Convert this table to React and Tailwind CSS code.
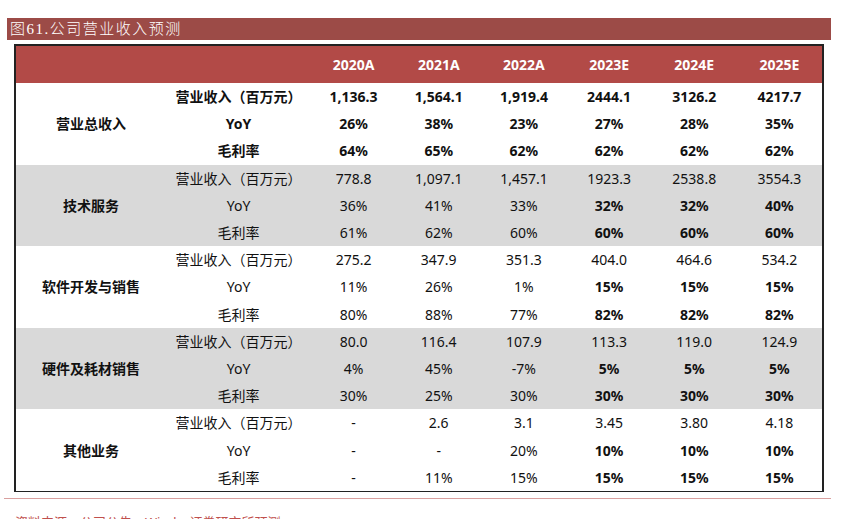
import React from 'react';

const years = ['2020A', '2021A', '2022A', '2023E', '2024E', '2025E'];

// estBold: bold only on the forecast columns (2023E onwards)
const sections = [
  {
    name: '营业总收入',
    shade: false,
    allBold: true,
    rows: [
      ['营业收入（百万元）', ['1,136.3', '1,564.1', '1,919.4', '2444.1', '3126.2', '4217.7']],
      ['YoY', ['26%', '38%', '23%', '27%', '28%', '35%']],
      ['毛利率', ['64%', '65%', '62%', '62%', '62%', '62%']],
    ],
  },
  {
    name: '技术服务',
    shade: true,
    rows: [
      ['营业收入（百万元）', ['778.8', '1,097.1', '1,457.1', '1923.3', '2538.8', '3554.3']],
      ['YoY', ['36%', '41%', '33%', '32%', '32%', '40%'], true],
      ['毛利率', ['61%', '62%', '60%', '60%', '60%', '60%'], true],
    ],
  },
  {
    name: '软件开发与销售',
    shade: false,
    rows: [
      ['营业收入（百万元）', ['275.2', '347.9', '351.3', '404.0', '464.6', '534.2']],
      ['YoY', ['11%', '26%', '1%', '15%', '15%', '15%'], true],
      ['毛利率', ['80%', '88%', '77%', '82%', '82%', '82%'], true],
    ],
  },
  {
    name: '硬件及耗材销售',
    shade: true,
    rows: [
      ['营业收入（百万元）', ['80.0', '116.4', '107.9', '113.3', '119.0', '124.9']],
      ['YoY', ['4%', '45%', '-7%', '5%', '5%', '5%'], true],
      ['毛利率', ['30%', '25%', '30%', '30%', '30%', '30%'], true],
    ],
  },
  {
    name: '其他业务',
    shade: false,
    rows: [
      ['营业收入（百万元）', ['-', '2.6', '3.1', '3.45', '3.80', '4.18']],
      ['YoY', ['-', '-', '20%', '10%', '10%', '10%'], true],
      ['毛利率', ['-', '11%', '15%', '15%', '15%', '15%'], true],
    ],
  },
];

const Section = ({ section }) => (
  <div
    className={`grid grid-cols-[150px_145px_repeat(6,1fr)] h-[81.6px] ${
      section.shade ? 'bg-[#d9d9d9]' : 'bg-white'
    }`}
  >
    <div className="row-span-3 flex items-center justify-center font-bold">{section.name}</div>
    {section.rows.map(([label, vals, estBold]) => (
      <React.Fragment key={label}>
        <div className={`flex items-center justify-center ${section.allBold ? 'font-bold' : ''}`}>{label}</div>
        {vals.map((v, i) => (
          <div
            key={i}
            className={`flex items-center justify-center ${
              section.allBold || (estBold && i >= 3) ? 'font-bold' : ''
            }`}
          >
            {v}
          </div>
        ))}
      </React.Fragment>
    ))}
  </div>
);

export default function App() {
  return (
    <div className="w-[846px] h-[519px] overflow-hidden bg-white font-['Noto_Sans','Noto_Sans_CJK_SC',sans-serif] text-[14px] text-[#111]">
      <div className="pt-[18px] pl-[7px] pr-[15px]">
        <div className="h-[22px] bg-[#9c4b47] text-white flex items-center pl-[3px] font-['Liberation_Serif','Noto_Sans_CJK_SC',serif] font-light text-[15px] tracking-[1.5px]">
          图61.公司营业收入预测
        </div>
      </div>
      <div className="ml-[14px] mr-[22px] mt-[4px] border-2 border-[#222] border-b-[1.5px]">
        <div className="grid grid-cols-[150px_145px_repeat(6,1fr)] h-[37px] bg-[#b24a47] text-white font-bold">
          <div />
          <div />
          {years.map((y) => (
            <div key={y} className="flex items-center justify-center">{y}</div>
          ))}
        </div>
        {sections.map((s) => (
          <Section key={s.name} section={s} />
        ))}
      </div>
      <div className="mt-[6px] ml-[4px] mr-[15px] h-[1.5px] bg-[#d9a09f]" />
      <div className="mt-[17px] ml-[15px] text-[#c0504d] text-[13px] leading-none">
        资料来源：公司公告，Wind，证券研究所预测
      </div>
    </div>
  );
}
